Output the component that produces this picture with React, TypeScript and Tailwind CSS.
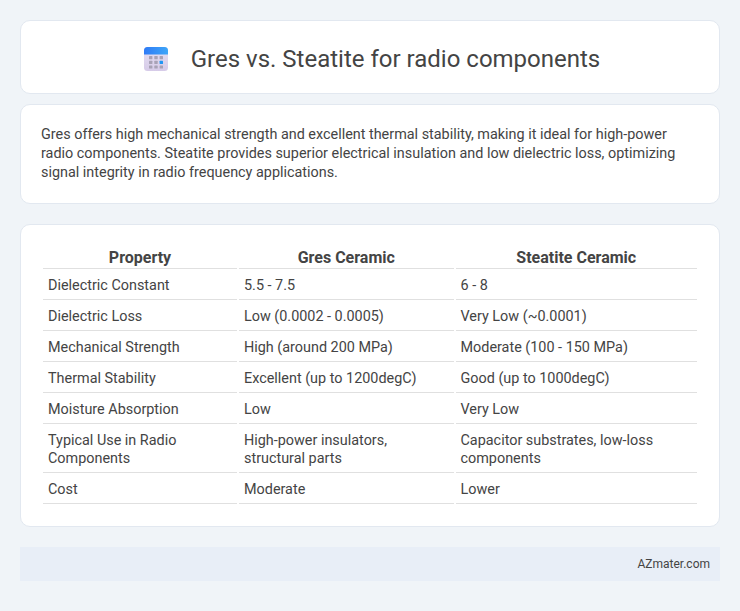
const rows = [
  ["Dielectric Constant", "5.5 - 7.5", "6 - 8"],
  ["Dielectric Loss", "Low (0.0002 - 0.0005)", "Very Low (~0.0001)"],
  ["Mechanical Strength", "High (around 200 MPa)", "Moderate (100 - 150 MPa)"],
  ["Thermal Stability", "Excellent (up to 1200degC)", "Good (up to 1000degC)"],
  ["Moisture Absorption", "Low", "Very Low"],
  ["Typical Use in Radio Components", "High-power insulators, structural parts", "Capacitor substrates, low-loss components"],
  ["Cost", "Moderate", "Lower"],
];

function CalendarIcon() {
  const dots = [0, 1, 2];
  return (
    <svg width="24" height="24" viewBox="0 0 24 24" className="shrink-0">
      <defs>
        <linearGradient id="b" x1="0" y1="0" x2="1" y2="0">
          <stop offset="0" stopColor="#2f7bf6" />
          <stop offset="1" stopColor="#3ea6f8" />
        </linearGradient>
        <linearGradient id="p" x1="0" y1="0" x2="0" y2="1">
          <stop offset="0" stopColor="#e6e0f2" />
          <stop offset="1" stopColor="#d6cbe8" />
        </linearGradient>
      </defs>
      <rect x="0" y="0" width="24" height="24" rx="3.5" fill="url(#p)" />
      <path d="M0 7.5V3.5A3.5 3.5 0 0 1 3.5 0h17A3.5 3.5 0 0 1 24 3.5v4z" fill="url(#b)" />
      {dots.map((r) =>
        [0, 1, 2].map((c) => (
          <rect key={`${r}${c}`} x={5 + c * 5.3} y={9 + r * 4.7} width="3.4" height="3.2" rx="0.5" fill={r === 1 && c === 2 ? "#2196f3" : "#a8a2b6"} />
        ))
      )}
    </svg>
  );
}

export default function App() {
  return (
    <div className="min-h-[611px] bg-[#f0f4f8] p-5 font-['Roboto',sans-serif] text-[#444]">
      <div className="flex h-[74px] items-center justify-center gap-[23px] rounded-[10px] border border-[#e2e8f0] bg-white pl-1 pt-1">
        <CalendarIcon />
        <h1 className="text-2xl font-normal text-[#444]">Gres vs. Steatite for radio components</h1>
      </div>
      <div className="mt-[10px] rounded-[10px] border border-[#e2e8f0] bg-white px-5 pt-5 pb-[21px] text-[14.4px] leading-[19px]">
        Gres offers high mechanical strength and excellent thermal stability, making it ideal for high-power radio components. Steatite provides superior electrical insulation and low dielectric loss, optimizing signal integrity in radio frequency applications.
      </div>
      <div className="mt-5 rounded-[10px] border border-[#e2e8f0] bg-white p-5">
        <table className="w-full border-separate border-spacing-[2px] text-[14.4px] leading-[18px]">
          <thead>
            <tr>
              <th className="w-[194px] border-b border-[#e0e0e0] px-[5px] py-0 text-center text-base leading-[21px] font-bold">Property</th>
              <th className="w-[214.5px] border-b border-[#e0e0e0] px-[5px] py-0 text-center text-base leading-[21px] font-bold">Gres Ceramic</th>
              <th className="border-b border-[#e0e0e0] px-[5px] py-0 text-center text-base leading-[21px] font-bold">Steatite Ceramic</th>
            </tr>
          </thead>
          <tbody>
            {rows.map((r) => (
              <tr key={r[0]}>
                {r.map((c, i) => (
                  <td key={i} className="border-b border-[#e0e0e0] px-[5px] pt-[6px] pb-[4px] text-left font-normal">{c}</td>
                ))}
              </tr>
            ))}
          </tbody>
        </table>
      </div>
      <div className="mt-5 flex h-[34px] items-center justify-end bg-[#e8eef7] px-[10px] text-xs text-[#444]">
        AZmater.com
      </div>
    </div>
  );
}
